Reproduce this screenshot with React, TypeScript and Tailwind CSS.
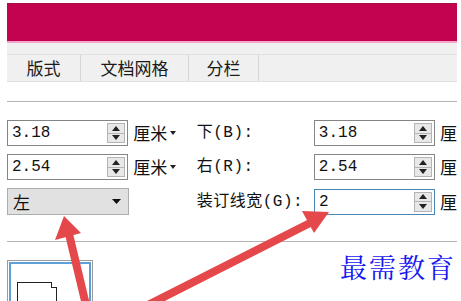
const cjk = "font-['Noto_Sans_CJK_SC',sans-serif]";
const mono = "font-['Liberation_Mono','Noto_Sans_CJK_SC',monospace]";

function Spinner() {
  return (
    <div className="mr-[2px] flex h-[20px] w-[18px] flex-col border border-[#b4b4b4] bg-[#e8e8e8]">
      <div className="flex flex-1 items-center justify-center border-b border-[#b4b4b4]">
        <svg width="8" height="5" viewBox="0 0 8 5">
          <path d="M0 5 L4 0 L8 5 Z" fill="#222" />
        </svg>
      </div>
      <div className="flex flex-1 items-center justify-center">
        <svg width="8" height="5" viewBox="0 0 8 5">
          <path d="M0 0 L4 5 L8 0 Z" fill="#222" />
        </svg>
      </div>
    </div>
  );
}

function NumInput({ value, focused }: { value: string; focused?: boolean }) {
  return (
    <div
      className={`flex h-[26px] w-[122px] items-center justify-between border bg-white ${
        focused ? "border-[#4a86b4]" : "border-[#858585]"
      }`}
    >
      <span className={`pl-[4px] text-[16px] text-[#111] ${mono}`}>{value}</span>
      <Spinner />
    </div>
  );
}

function Unit() {
  return (
    <div className={`flex items-center text-[17px] text-[#111] ${cjk}`}>
      <span>厘米</span>
      <svg width="6" height="4" viewBox="0 0 6 4" className="ml-[3px]">
        <path d="M0 0 L6 0 L3 4 Z" fill="#222" />
      </svg>
    </div>
  );
}

function Label({ text }: { text: string }) {
  return <div className={`w-[118px] text-[16px] tracking-[0.5px] text-[#111] ${mono}`}>{text}</div>;
}

export default function App() {
  return (
    <div className="relative h-[301px] w-[461px] overflow-hidden bg-white">
      <div className="pl-[7px] pr-[4px] pt-[3px]">
        {/* title bar */}
        <div className="h-[38px] border-t border-[#a40f4a] bg-[#c3034f]" />
        <div className="h-[2px] bg-[#f5a7c9]" />

        {/* tabs */}
        <div className="h-[11px] bg-[#f0f0f0]" />
        <div className={`flex h-[28px] border-t border-b border-[#e0e0e0] bg-[#f0f0f0] text-[17px] text-[#1a1a1a] ${cjk}`}>
          <div className="flex w-[74px] items-center justify-center border-r border-[#d6d6d6]">版式</div>
          <div className="flex w-[108px] items-center justify-center border-r border-[#d6d6d6]">文档网格</div>
          <div className="flex w-[70px] items-center justify-center border-r border-[#d6d6d6]">分栏</div>
        </div>

        <div className="mt-[19px] h-px bg-[#b4b4b4]" />

        {/* margins */}
        <div className="mt-[18px] flex flex-col gap-[8px]">
          <div className="flex items-center">
            <NumInput value="3.18" />
            <div className="ml-[5px] w-[64px]"><Unit /></div>
            <Label text="下(B):" />
            <NumInput value="3.18" />
            <div className={`ml-[5px] text-[17px] text-[#111] ${cjk}`}>厘</div>
          </div>
          <div className="flex items-center">
            <NumInput value="2.54" />
            <div className="ml-[5px] w-[64px]"><Unit /></div>
            <Label text="右(R):" />
            <NumInput value="2.54" />
            <div className={`ml-[5px] text-[17px] text-[#111] ${cjk}`}>厘</div>
          </div>
          <div className="flex items-center">
            <div className="flex h-[27px] w-[123px] items-center justify-between border border-[#adadad] bg-[#e1e1e1] px-[5px]">
              <span className={`text-[17px] text-[#111] ${cjk}`}>左</span>
              <svg width="9" height="5" viewBox="0 0 9 5" className="mr-[2px]">
                <path d="M0 0 L9 0 L4.5 5 Z" fill="#111" />
              </svg>
            </div>
            <div className="w-[68px]" />
            <Label text="装订线宽(G):" />
            <NumInput value="2" focused />
            <div className={`ml-[5px] text-[17px] text-[#111] ${cjk}`}>厘</div>
          </div>
        </div>

        <div className="mt-[26px] h-px bg-[#b4b4b4]" />

        {/* preview */}
        <div className="mt-[18px] w-[86px] border border-[#9a9a9a] bg-white p-[1px]">
          <div className="h-[60px] border-2 border-[#5d9fd6] pl-[6px] pt-[18px]">
            <div className="relative h-[30px] w-[40px] border border-[#222] bg-white">
              <div className="absolute -right-px -top-px h-[6px] w-[6px] border-b border-l border-[#222] bg-white" />
            </div>
          </div>
        </div>
      </div>

      {/* watermark */}
      <div className="absolute left-[340px] top-[253px] text-[27px] leading-none tracking-[2px] text-[#1616f0] font-['Noto_Serif_CJK_SC','Noto_Sans_CJK_SC',serif]">
        最需教育
      </div>

      {/* annotation arrows */}
      <svg className="absolute left-0 top-0" width="461" height="301" viewBox="0 0 461 301">
        <line x1="86" y1="305" x2="69" y2="234" stroke="#e5484a" strokeWidth="8" />
        <path d="M64 216 L55 240 L81 233 Z" fill="#e5484a" />
        <line x1="148" y1="305" x2="310" y2="223" stroke="#e5484a" strokeWidth="8" />
        <path d="M329 212 L302 211 L314 233 Z" fill="#e5484a" />
      </svg>
    </div>
  );
}
